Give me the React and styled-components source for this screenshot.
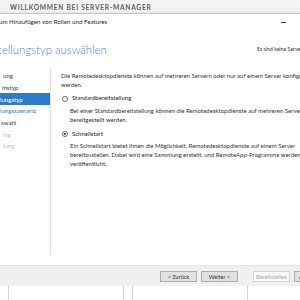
import styled, { createGlobalStyle } from "styled-components"

const GlobalStyle = createGlobalStyle`
    html, body {
        margin: 0;
        padding: 0;
        background: #ffffff;
        overflow: hidden;
    }
    body {
        font-family: "Segoe UI", Lato, "Open Sans", sans-serif;
        color: #262626;
    }
`

const Screen = styled.div`
    width: 300px;
    height: 300px;
    overflow: hidden;
    display: flex;
    flex-direction: column;
`

const ManagerHeader = styled.div`
    height: 13px;
    flex: none;
    background: #f3f3f3;
    display: flex;
    align-items: center;
    padding-left: 10px;
    font-size: 6.6px;
    font-weight: 700;
    letter-spacing: 0.75px;
    color: #5e5e5e;
    white-space: nowrap;
`

const Wizard = styled.div`
    flex: none;
    height: 272px;
    display: flex;
    flex-direction: column;
    background: #ffffff;
    border-top: 1px solid #c9c9c9;
    box-shadow: 0 -1px 1px rgba(0, 0, 0, 0.06);
`

const TitleBar = styled.div`
    height: 15px;
    flex: none;
    display: flex;
    align-items: center;
    justify-content: space-between;
    padding-right: 14px;
    font-size: 6.2px;
    color: #1f1f1f;
    white-space: nowrap;
    span {
        margin-left: -1px;
    }
`

const Minimize = styled.div`
    width: 5px;
    height: 1px;
    background: #444;
    margin-top: 1px;
`

const HeadingRow = styled.div`
    height: 36px;
    flex: none;
    display: flex;
    justify-content: space-between;
    align-items: center;
    padding-top: 2px;
    white-space: nowrap;
    h1 {
        margin: 0 0 0 -2px;
        font-size: 11.4px;
        font-weight: 300;
        color: #3a8cc2;
    }
    p {
        margin: 0;
        font-size: 5.2px;
        color: #333;
        width: 43px;
        overflow: hidden;
    }
`

const Body = styled.div`
    flex: 1;
    display: flex;
    padding-bottom: 10px;
`

const Nav = styled.ul`
    width: 50px;
    flex: none;
    margin: 0;
    padding: 3px 0 0;
    list-style: none;
    border-right: 1px solid #e3e3e3;
`

const NavItem = styled.li`
    height: 11.7px;
    display: flex;
    align-items: center;
    padding-left: ${(p) => p.$indent || 0}px;
    font-size: 6.1px;
    white-space: nowrap;
    overflow: hidden;
    background: ${(p) => (p.$state === "active" ? "#2b7cc9" : "transparent")};
    color: ${(p) =>
        p.$state === "active"
            ? "#ffffff"
            : p.$state === "link"
            ? "#2b7cc9"
            : p.$state === "off"
            ? "#c4c4c4"
            : "#444444"};
`

const Content = styled.div`
    flex: 1;
    padding: 5px 0 0 10px;
    font-size: 6px;
    line-height: 8.6px;
    white-space: nowrap;
    overflow: hidden;
`

const Paragraph = styled.p`
    margin: 0 0 ${(p) => p.$gap || 0}px ${(p) => p.$indent || 0}px;
    color: ${(p) => p.$color || "#333"};
`

const Option = styled.label`
    display: flex;
    align-items: center;
    gap: 4px;
    margin: 0 0 4px 1px;
    height: 9px;
    color: #222;
`

const Radio = styled.span`
    width: 4px;
    height: 4px;
    border: 1px solid #6f6f6f;
    border-radius: 50%;
    background: #fff;
    display: flex;
    align-items: center;
    justify-content: center;
    &::after {
        content: "";
        width: 2.4px;
        height: 2.4px;
        border-radius: 50%;
        background: ${(p) => (p.$checked ? "#222" : "transparent")};
    }
`

const Footer = styled.div`
    height: 21px;
    flex: none;
    display: flex;
    align-items: center;
    justify-content: flex-end;
    gap: 4px;
    margin-right: -31px;
    background: #f0f0f0;
    border-top: 1px solid #e2e2e2;
    box-sizing: border-box;
`

const Button = styled.button`
    width: 37px;
    height: 11px;
    margin-left: ${(p) => p.$space || 0}px;
    padding: 0;
    font-family: inherit;
    font-size: 5.6px;
    background: ${(p) => (p.disabled ? "#f9f9f9" : "#e1e1e1")};
    color: ${(p) => (p.disabled ? "#a8a8a8" : "#333")};
    border: 1px solid ${(p) => (p.disabled ? "#d2d2d2" : "#adadad")};
    white-space: nowrap;
    overflow: hidden;
`

const Tiles = styled.div`
    flex: 1;
    display: flex;
    gap: 8px;
    padding-left: 8px;
    background: #ffffff;
`

const Tile = styled.div`
    width: 114px;
    border-left: 1px solid #d4d4d4;
    border-right: 1px solid #d4d4d4;
`

const navItems = [
    { text: "ung", state: "done", indent: 3 },
    { text: "instyp", state: "done", indent: 2 },
    { text: "lungstyp", state: "active", indent: 0 },
    { text: "lungsszenario", state: "link", indent: 0 },
    { text: "swahl", state: "done", indent: 1 },
    { text: "ing", state: "off", indent: 3 },
    { text: "lung", state: "off", indent: 3 },
]

export default function App() {
    return (
        <>
            <GlobalStyle />
            <Screen>
                <ManagerHeader>WILLKOMMEN BEI SERVER-MANAGER</ManagerHeader>
                <Wizard>
                    <TitleBar>
                        <span>um Hinzufügen von Rollen und Features</span>
                        <Minimize />
                    </TitleBar>
                    <HeadingRow>
                        <h1>tellungstyp auswählen</h1>
                        <p>Es sind keine Server ausgewählt.</p>
                    </HeadingRow>
                    <Body>
                        <Nav>
                            {navItems.map((item) => (
                                <NavItem key={item.text} $state={item.state} $indent={item.indent}>
                                    {item.text}
                                </NavItem>
                            ))}
                        </Nav>
                        <Content>
                            <Paragraph>Die Remotedesktopdienste können auf mehreren Servern oder nur auf einem Server konfiguriert</Paragraph>
                            <Paragraph $gap={5}>werden.</Paragraph>
                            <Option>
                                <Radio />
                                Standardbereitstellung
                            </Option>
                            <Paragraph $indent={9}>Bei einer Standardbereitstellung können die Remotedesktopdienste auf mehreren Servern</Paragraph>
                            <Paragraph $indent={9} $gap={5}>bereitgestellt werden.</Paragraph>
                            <Option>
                                <Radio $checked />
                                Schnellstart
                            </Option>
                            <Paragraph $indent={9}>Ein Schnellstart bietet Ihnen die Möglichkeit, Remotedesktopdienste auf einem Server</Paragraph>
                            <Paragraph $indent={9}>bereitzustellen. Dabei wird eine Sammlung erstellt, und RemoteApp-Programme werden</Paragraph>
                            <Paragraph $indent={9}>veröffentlicht.</Paragraph>
                        </Content>
                    </Body>
                    <Footer>
                        <Button>&lt; Zurück</Button>
                        <Button>Weiter &gt;</Button>
                        <Button disabled $space={11}>Bereitstellen</Button>
                        <Button>Abbrechen</Button>
                    </Footer>
                </Wizard>
                <Tiles>
                    <Tile />
                    <Tile />
                </Tiles>
            </Screen>
        </>
    )
}
